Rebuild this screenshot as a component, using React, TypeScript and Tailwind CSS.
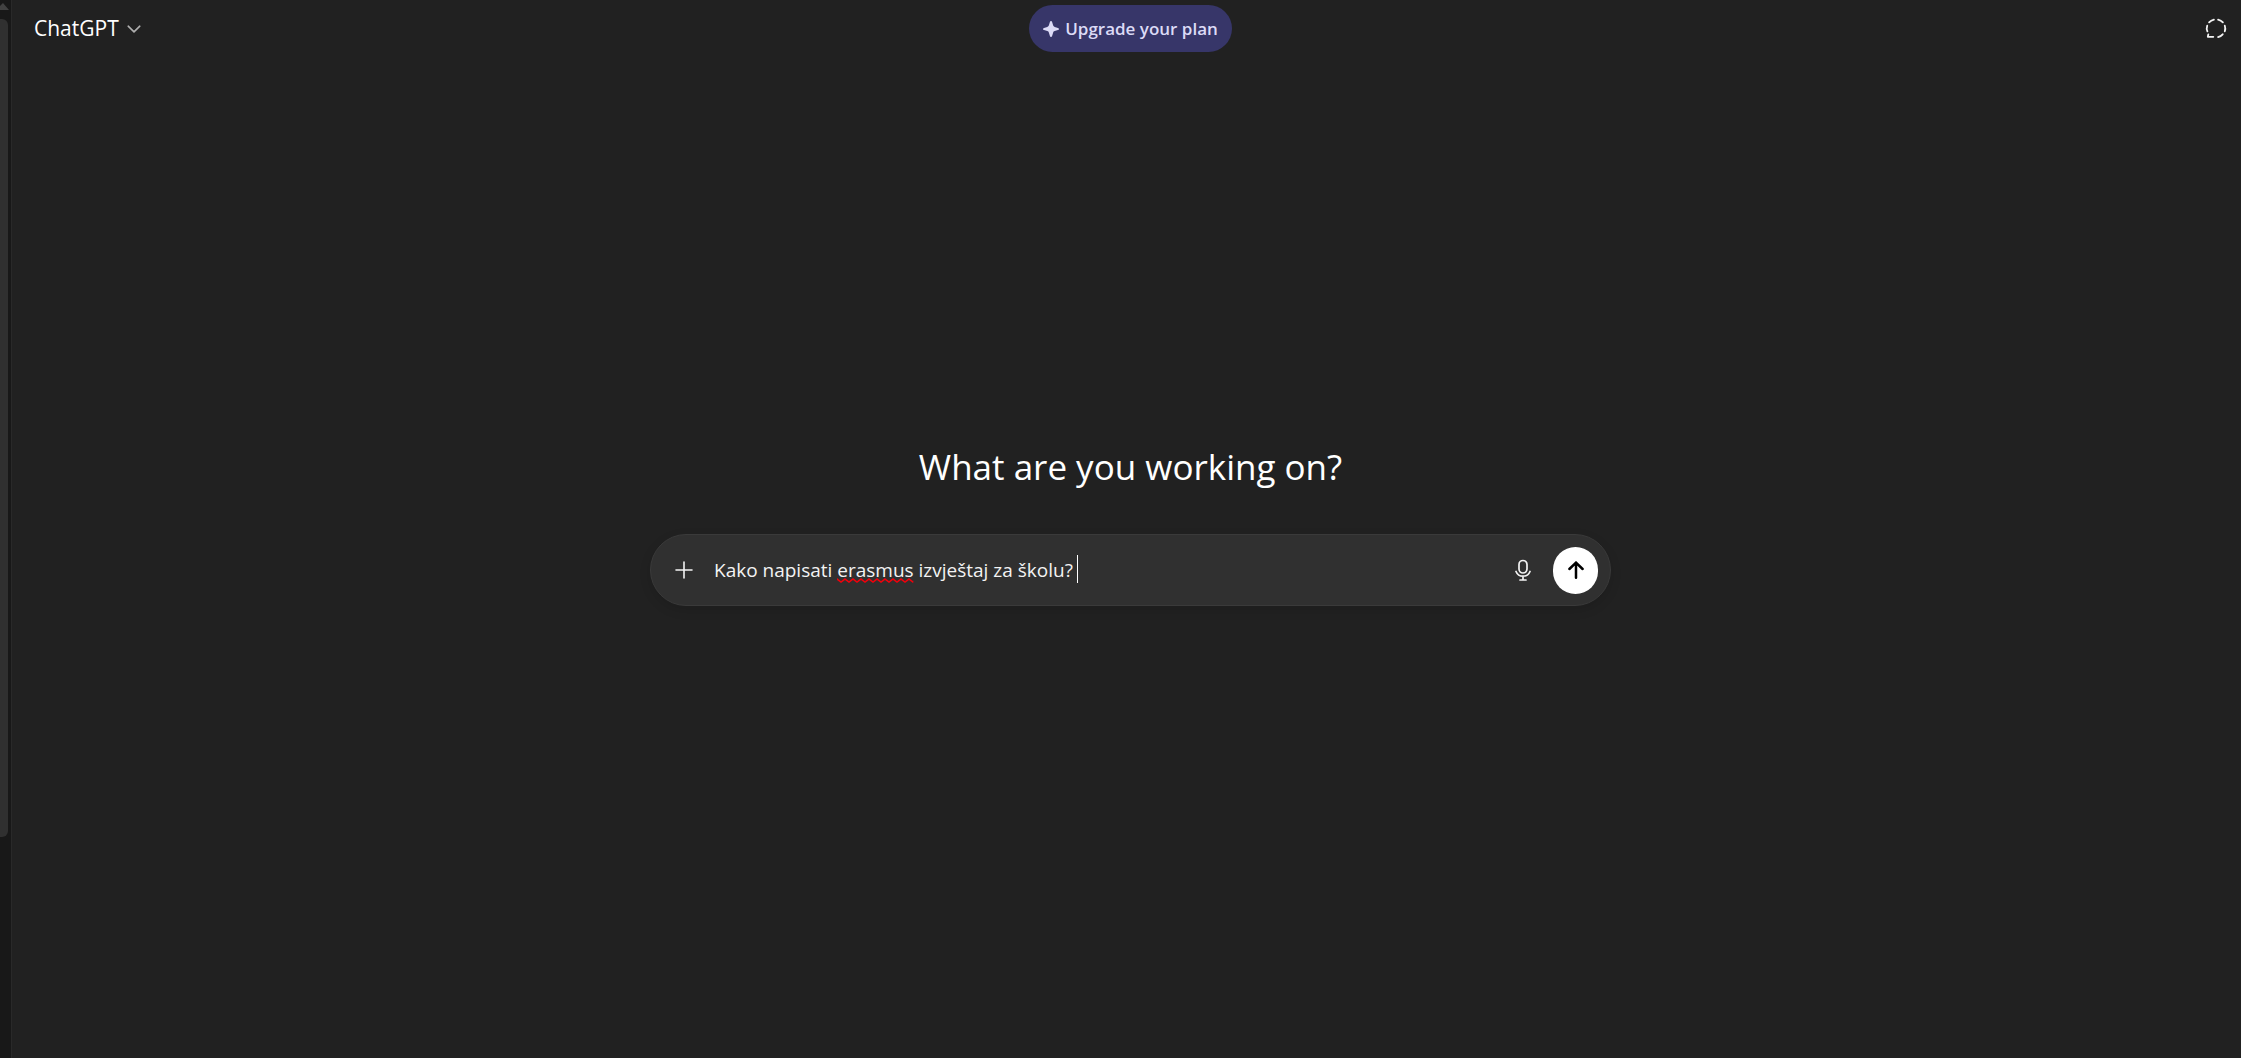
import React from "react";

function ChevronDown() {
  return (
    <svg viewBox="0 0 14 8" className="h-2 w-3.5" fill="none" stroke="#afafaf" strokeWidth="1.6" strokeLinecap="round" strokeLinejoin="round" aria-hidden="true">
      <path d="M1.2 1.2 7 6.8l5.8-5.6" />
    </svg>
  );
}

function Sparkle() {
  return (
    <svg viewBox="0 0 16 16" className="size-4" fill="currentColor" aria-hidden="true">
      <path d="M8 0c.6 0 .9.4 1.1 1l1 3.3c.3.9.7 1.3 1.6 1.6l3.3 1c.7.2 1 .6 1 1.1s-.3.9-1 1.1l-3.3 1c-.9.3-1.3.7-1.6 1.6l-1 3.3c-.2.6-.5 1-1.1 1s-.9-.4-1.1-1l-1-3.3c-.3-.9-.7-1.3-1.6-1.6l-3.3-1c-.7-.2-1-.6-1-1.1s.3-.9 1-1.1l3.3-1c.9-.3 1.3-.7 1.6-1.6l1-3.3C7.1.4 7.4 0 8 0Z" />
    </svg>
  );
}

function TemporaryChat() {
  return (
    <svg viewBox="0 0 22 22" className="size-[22px]" fill="none" stroke="#f3f3f3" strokeWidth="1.8" strokeLinecap="round" strokeLinejoin="round" aria-hidden="true">
      <path d="M8.9 1.6Q5.9 2.3 4.1 4.4" />
      <path d="M13.1 1.6Q16.1 2.3 17.9 4.4" />
      <path d="M19.8 7.7Q20.8 10.5 19.8 13.3" />
      <path d="M17.7 16.3Q15.800 18.5 13.1 19.1" />
      <path d="M2.2 7.7Q1.2 10.5 2.4 13.4" />
      <path d="M3.3 16.5 2.8 18.8H8.3" />
    </svg>
  );
}

function Plus() {
  return (
    <svg viewBox="0 0 18 18" className="size-[18px]" fill="none" stroke="#f3f3f3" strokeWidth="1.6" strokeLinecap="round" aria-hidden="true">
      <path d="M9 1v16M1 9h16" />
    </svg>
  );
}

function Microphone() {
  return (
    <svg viewBox="0 0 16 22" className="h-[22px] w-4" fill="none" stroke="#f3f3f3" strokeWidth="1.7" strokeLinecap="round" strokeLinejoin="round" aria-hidden="true">
      <rect x="4" y="1.5" width="8" height="12.5" rx="4" />
      <path d="M1 12.5c1.2 2.9 3.8 4.7 7 4.7s5.8-1.8 7-4.7M8 17.2v3.6M5 21h6" />
    </svg>
  );
}

function ArrowUp() {
  return (
    <svg viewBox="0 0 16 18" className="h-[18px] w-4" fill="none" stroke="#000" strokeWidth="2.5" strokeLinecap="round" strokeLinejoin="round" aria-hidden="true">
      <path d="M8 16.7V1.6M1.4 8 8 1.6 14.6 8" />
    </svg>
  );
}

function Misspelled({ children }: { children: React.ReactNode }) {
  return (
    <span className="relative">
      {children}
      <svg className="absolute inset-x-0 bottom-0 h-[5px] w-full" aria-hidden="true">
        <defs>
          <pattern id="squiggle" width="8" height="5" patternUnits="userSpaceOnUse">
            <path d="M-4 4 0 1 4 4 8 1 12 4" fill="none" stroke="#f0000a" strokeWidth="1.5" />
          </pattern>
        </defs>
        <rect width="100%" height="5" fill="url(#squiggle)" />
      </svg>
    </span>
  );
}

export default function App() {
  return (
    <div className="flex min-h-screen bg-[#212121] font-['Open_Sans','Noto_Sans',sans-serif] text-white">
      <aside className="flex w-3 shrink-0 flex-col border-r border-[#292929] bg-[#181818]">
        <div className="flex h-[19px] items-start overflow-hidden pt-[3px]">
          <svg viewBox="0 0 10 7" className="h-[7px] w-2.5" fill="#414141" aria-hidden="true">
            <path d="M0 7V3L3 0l6 7Z" />
          </svg>
        </div>
        <div className="mr-[3px] h-[818px] rounded-r-md bg-[#303030]" />
      </aside>

      <main className="flex min-w-0 flex-1 flex-col pl-2">
        <header className="grid h-[57px] grid-cols-3 items-center">
          <button type="button" className="flex items-center gap-2 justify-self-start pl-[14px] text-[21px]">
            ChatGPT
            <ChevronDown />
          </button>
          <button type="button" className="flex h-[47px] items-center gap-1.5 justify-self-center rounded-full bg-[#373669] px-[14px] text-[17px] font-semibold text-[#dcdbf6]">
            <Sparkle />
            Upgrade your plan
          </button>
          <button type="button" aria-label="Turn on temporary chat" className="justify-self-end pr-[14px]">
            <TemporaryChat />
          </button>
        </header>

        <section className="flex flex-col items-center pt-[386px]">
          <h1 className="text-[35px] leading-[48px]">What are you working on?</h1>
          <form className="mt-[43px] flex h-[72px] w-full max-w-[961px] items-center rounded-full border border-[#3a3a3a] bg-[#303030] pr-3 pl-6 shadow-[0_4px_12px_rgba(0,0,0,0.12)]" onSubmit={(e) => e.preventDefault()}>
            <button type="button" aria-label="Add files and more">
              <Plus />
            </button>
            <div role="textbox" aria-label="Message" tabIndex={0} className="ml-[21px] flex flex-1 items-center text-[19px] text-[#f3f3f3] outline-none">
              <p>
                Kako napisati <Misspelled>erasmus</Misspelled> izvještaj za školu?
              </p>
              <span className="mb-[3px] ml-1 h-7 w-px bg-white" aria-hidden="true" />
            </div>
            <button type="button" aria-label="Dictate" className="mr-[22px]">
              <Microphone />
            </button>
            <button type="submit" aria-label="Send prompt" className="flex h-[47px] w-[45px] items-center justify-center rounded-full bg-white">
              <ArrowUp />
            </button>
          </form>
        </section>
      </main>
    </div>
  );
}
